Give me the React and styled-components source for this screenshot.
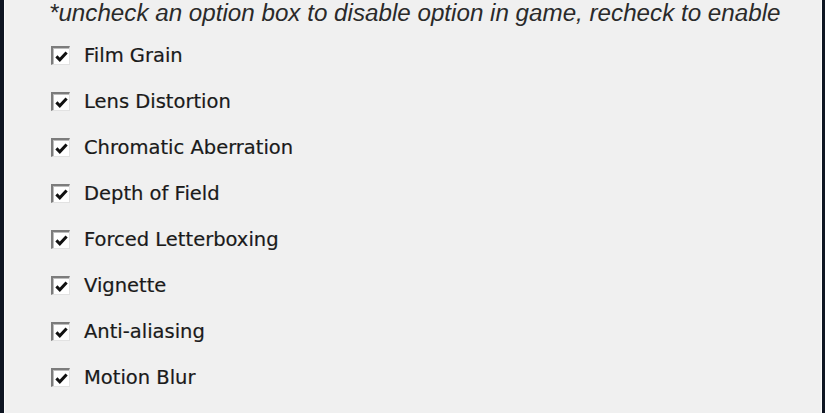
import React from 'react';
import styled, { createGlobalStyle } from 'styled-components';

const GlobalStyle = createGlobalStyle`
  html, body {
    margin: 0;
    padding: 0;
    background: #f0f0f0;
  }
`;

const Frame = styled.div`
  width: 825px;
  height: 413px;
  box-sizing: border-box;
  display: flex;
  background: #0e1522;
  padding: 0 3px 0 4px;
  overflow: hidden;
`;

const Panel = styled.div`
  flex: 1;
  background: #f0f0f0;
  border-left: 1px solid #fafafa;
  border-right: 1px solid #fafafa;
  padding: 0 0 0 44px;
  display: flex;
  flex-direction: column;
`;

const Note = styled.p`
  margin: 0;
  padding-top: 1px;
  height: 29px;
  line-height: 24px;
  font-family: "Liberation Sans", Arial, sans-serif;
  font-style: italic;
  font-size: 24.2px;
  color: #2a2a2a;
  white-space: nowrap;
`;

const List = styled.ul`
  list-style: none;
  margin: 0;
  padding: 16px 0 0 2px;
  display: flex;
  flex-direction: column;
  gap: 27px;
`;

const Row = styled.li`
  display: flex;
  align-items: center;
  gap: 14px;
  height: 19px;
`;

const Box = styled.span`
  width: 19px;
  height: 19px;
  box-sizing: border-box;
  background: #fff;
  border-top: 2px solid #7c7c7c;
  border-left: 2px solid #7c7c7c;
  border-right: 1px solid #e2e2e2;
  border-bottom: 1px solid #e2e2e2;
  box-shadow: inset 1px 1px 0 #bdbdbd;
  display: flex;
  align-items: center;
  justify-content: center;
`;

const Label = styled.span`
  font-family: "DejaVu Sans", Tahoma, sans-serif;
  font-size: 19.5px;
  color: #1a1a1a;
  line-height: 19px;
  -webkit-text-stroke: 0.2px #1a1a1a;
`;

const Check = () => (
  <svg width="14" height="13" viewBox="0 0 14 13">
    <path d="M2.4 6.4 L5.8 9.8 L12.6 2.4" fill="none" stroke="#111" strokeWidth="3" />
  </svg>
);

const options = [
  'Film Grain',
  'Lens Distortion',
  'Chromatic Aberration',
  'Depth of Field',
  'Forced Letterboxing',
  'Vignette',
  'Anti-aliasing',
  'Motion Blur',
];

export default function App() {
  return (
    <>
      <GlobalStyle />
      <Frame>
        <Panel>
          <Note>*uncheck an option box to disable option in game, recheck to enable</Note>
          <List>
            {options.map((o) => (
              <Row key={o}>
                <Box>
                  <Check />
                </Box>
                <Label>{o}</Label>
              </Row>
            ))}
          </List>
        </Panel>
      </Frame>
    </>
  );
}
